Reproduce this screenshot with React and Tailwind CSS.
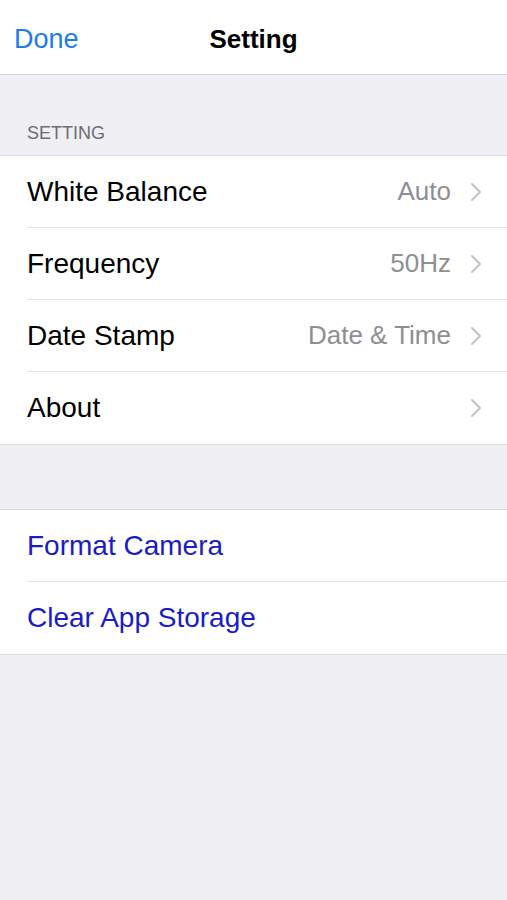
import React from "react";

const Chevron = () => (
  <svg width="12" height="20" viewBox="0 0 12 20" fill="none" className="shrink-0">
    <path d="M2 2l8 8-8 8" stroke="#c4c4c8" strokeWidth="2" strokeLinecap="round" strokeLinejoin="round" />
  </svg>
);

const Row = ({ label, value, last, chevron = true, color = "text-black" }) => (
  <div className="flex h-[72px] items-center pl-[27px]">
    <div className={`flex h-full flex-1 items-center pr-[25px] ${last ? "" : "border-b border-[#e2e2e6]"}`}>
      <span className={`flex-1 text-[28px] ${color}`}>{label}</span>
      {value && <span className="mr-[19px] text-[26px] text-[#8e8e93]">{value}</span>}
      {chevron && <Chevron />}
    </div>
  </div>
);

const App = () => {
  const settings = [
    { label: "White Balance", value: "Auto" },
    { label: "Frequency", value: "50Hz" },
    { label: "Date Stamp", value: "Date & Time" },
    { label: "About", value: null },
  ];

  return (
    <div className="min-h-[900px] bg-[#efeff4] font-['Liberation_Sans',Arial,sans-serif]">
      {/* Nav bar */}
      <nav className="relative flex h-[75px] items-center justify-center border-b border-[#d4d4d8] bg-white pt-[4px]">
        <button className="absolute left-[14px] top-[4px] bottom-0 text-[27px] text-[#1a7cf0]">Done</button>
        <h1 className="text-[26px] font-semibold text-black">Setting</h1>
      </nav>

      {/* Section header */}
      <div className="flex h-[80px] items-end px-[27px] pb-[8px]">
        <span className="text-[18px] text-[#6d6d72]">SETTING</span>
      </div>

      <div className="border-y border-[#dcdce0] bg-white">
        {settings.map((s, i) => (
          <Row key={s.label} label={s.label} value={s.value} last={i === settings.length - 1} />
        ))}
      </div>

      <div className="h-[64px]" />

      <div className="border-y border-[#dcdce0] bg-white">
        <Row label="Format Camera" chevron={false} color="text-[#1c1cc4]" />
        <Row label="Clear App Storage" chevron={false} color="text-[#1c1cc4]" last />
      </div>
    </div>
  );
};

export default App;
